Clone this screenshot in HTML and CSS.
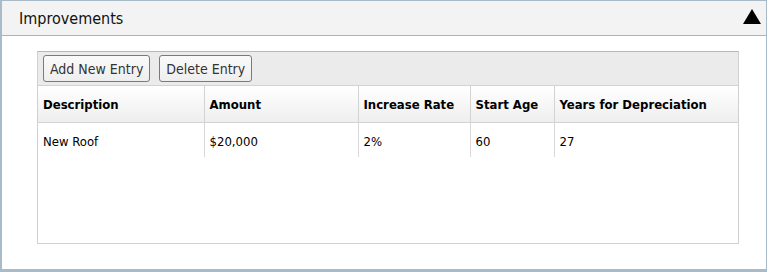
FILE: index.html
```html
<!DOCTYPE html>
<html>
<head>
<meta charset="utf-8">
<link rel="stylesheet" href="styles.css">
</head>
<body>
<div class="panel">
  <div class="panel-head">
    <span class="panel-title">Improvements</span>
    <span class="toggle"></span>
  </div>
  <div class="panel-body">
    <div class="grid">
      <div class="toolbar">
        <button class="btn">Add New Entry</button>
        <button class="btn">Delete Entry</button>
      </div>
      <table class="tbl">
        <colgroup>
          <col class="c1"><col class="c2"><col class="c3"><col class="c4"><col class="c5">
        </colgroup>
        <thead>
          <tr>
            <th>Description</th>
            <th>Amount</th>
            <th>Increase Rate</th>
            <th>Start Age</th>
            <th>Years for Depreciation</th>
          </tr>
        </thead>
        <tbody>
          <tr>
            <td>New Roof</td>
            <td>$20,000</td>
            <td>2%</td>
            <td>60</td>
            <td>27</td>
          </tr>
        </tbody>
      </table>
      <div class="filler"></div>
    </div>
  </div>
</div>
</body>
</html>
```

FILE: styles.css
```css
html, body {
  margin: 0;
  padding: 0;
  background: #ffffff;
}
body {
  font-family: "DejaVu Sans Condensed", "DejaVu Sans", sans-serif;
  font-size: 13px;
  color: #000;
}
.panel {
  width: 764px;
  border: 1px solid #a9bac8;
  border-left-width: 2px;
  border-bottom-width: 3px;
  height: 268px;
  box-sizing: content-box;
}
.panel-head {
  height: 34px;
  background: #f3f3f3;
  border-bottom: 1px solid #a9b3bb;
  display: flex;
  align-items: center;
  justify-content: space-between;
  padding: 0 5px 0 17px;
}
.panel-title {
  font-size: 16px;
  color: #111;
}
.toggle {
  width: 0;
  height: 0;
  border-left: 9px solid transparent;
  border-right: 9px solid transparent;
  border-bottom: 15px solid #000;
  margin-top: -3px;
}
.panel-body {
  padding: 15px 26px 0 35px;
}
.grid {
  border: 1px solid #d0d0d0;
  border-top-color: #a9bccb;
  width: 700px;
}
.toolbar {
  background: #ebebeb;
  height: 33px;
  display: flex;
  align-items: center;
  gap: 9px;
  padding-left: 5px;
  border-bottom: 1px solid #d3d3d3;
}
.btn {
  font-family: inherit;
  font-size: 14px;
  color: #333;
  height: 27px;
  padding: 0 6px;
  border: 1px solid #7a7a7a;
  border-radius: 3px;
  background: linear-gradient(#fafafa, #eeeeee);
}
.tbl {
  width: 100%;
  border-collapse: collapse;
  table-layout: fixed;
}
.c1 { width: 166px; }
.c2 { width: 154px; }
.c3 { width: 112px; }
.c4 { width: 84px; }
.c5 { width: auto; }
.tbl th {
  text-align: left;
  font-weight: bold;
  height: 36px;
  padding: 0 5px;
  background: linear-gradient(#ffffff, #eeeeee);
  border-right: 1px solid #d3d3d3;
  border-bottom: 1px solid #d3d3d3;
}
.tbl td {
  height: 32px;
  padding: 2px 5px 0;
  border-right: 1px solid #d8d8d8;
}
.tbl th:last-child, .tbl td:last-child {
  border-right: none;
}
.filler {
  height: 86px;
}
```
